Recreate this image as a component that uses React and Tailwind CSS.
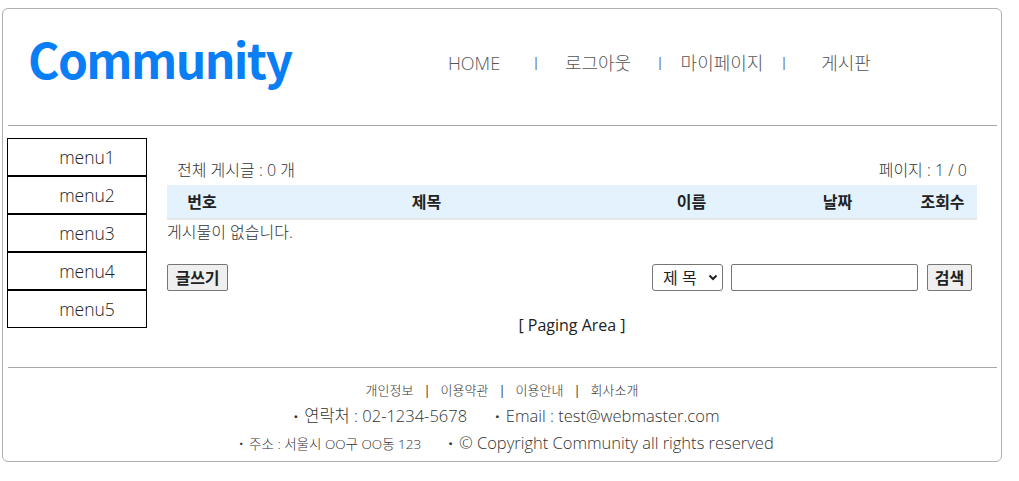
import React from 'react';

const FONT = "font-['Open_Sans','Noto_Sans_CJK_KR',sans-serif]";

const NAV = ['HOME', '로그아웃', '마이페이지', '게시판'];
const MENUS = ['menu1', 'menu2', 'menu3', 'menu4', 'menu5'];
const FOOTER_LINKS = ['개인정보', '이용약관', '이용안내', '회사소개'];

/* 게시판 헤더 컬럼 — 폭은 px 고정 */
const COLUMNS = [
  { label: '번호', w: 'w-[70px]' },
  { label: '제목', w: 'w-[379px]' },
  { label: '이름', w: 'w-[151px]' },
  { label: '날짜', w: 'w-[141px]' },
  { label: '조회수', w: 'w-[69px]' },
];

const Dot = () => <span className="font-bold mr-[6px]">·</span>;

const Header = () => (
  <div className="h-[116px] flex">
    <div className="w-[416px] pl-[25px] pt-[25px]">
      <h1 className="font-['Noto_Sans_CJK_KR',sans-serif] text-[48px] leading-[48px] font-bold text-[#0a7ef5] tracking-[-1.6px]">Community</h1>
    </div>
    <ul className="flex pt-[42px] h-fit text-[18px] leading-[24px] font-light text-[#555]">
      {NAV.map((item, i) => (
        <React.Fragment key={item}>
          {i > 0 && <li className="w-[14px] text-center">I</li>}
          <li className="w-[110px] text-center">{item}</li>
        </React.Fragment>
      ))}
    </ul>
  </div>
);

const Sidebar = () => (
  <ul className="ml-[4px] mt-[12px] w-[140px]">
    {MENUS.map((m) => (
      <li
        key={m}
        className="h-[38px] border border-black pl-[20px] text-center text-[17.5px] leading-[36px] font-light text-[#222]"
      >
        {m}
      </li>
    ))}
  </ul>
);

const Board = () => (
  <div className="ml-[20px] w-[810px] pt-[32px] text-[#333]">
    <div className="flex justify-between h-[24px] px-[10px] text-[16px] leading-[24px] font-light">
      <span>전체 게시글 : 0 개</span>
      <span>페이지 : 1 / 0</span>
    </div>

    <div className="mt-[3px] h-[35px] flex items-center bg-[#e3f2fd] border-b-2 border-[#e4e6e8] text-[16px] font-bold text-[#222]">
      {COLUMNS.map((c) => (
        <div key={c.label} className={`${c.w} text-center`}>{c.label}</div>
      ))}
    </div>

    <p className="h-[24px] text-[16px] leading-[24px] font-light">게시물이 없습니다.</p>

    <div className="mt-[20px] flex justify-between h-[27px]">
      <button className="h-[27px] w-[61px] bg-[#efefef] border border-[#767676] rounded-[2px] text-[16px] font-bold text-[#222] leading-none">
        글쓰기
      </button>
      <div className="flex mr-[5px]">
        <div className="relative w-[71px] h-[27px]">
          <select className="appearance-none w-full h-full border border-[#767676] rounded-[3px] bg-white pl-[10px] text-[16px] text-[#222] leading-none">
            <option>제 목</option>
          </select>
          <svg className="absolute right-[5px] top-[10px] pointer-events-none" width="10" height="7" viewBox="0 0 10 7">
            <path d="M1.5 1.5 L5 5 L8.5 1.5" fill="none" stroke="#222" strokeWidth="2" />
          </svg>
        </div>
        <input className="ml-[8px] w-[187px] h-[27px] border border-[#767676] rounded-[2px] bg-white" />
        <button className="ml-[9px] h-[27px] w-[45px] bg-[#efefef] border border-[#767676] rounded-[2px] text-[16px] font-bold text-[#222] leading-none">
          검색
        </button>
      </div>
    </div>

    <p className="mt-[22px] h-[24px] text-center text-[16px] leading-[24px] text-[#222]">[ Paging Area ]</p>
  </div>
);

const Footer = () => (
  <div className="h-[93px] pt-[12px] text-[#333]">
    <ul className="flex justify-center gap-[10px] h-[20px] text-[13px] leading-[20px] font-light">
      {FOOTER_LINKS.map((l, i) => (
        <React.Fragment key={l}>
          {i > 0 && <li className="font-normal text-[#333]">|</li>}
          <li>{l}</li>
        </React.Fragment>
      ))}
    </ul>
    <div className="mt-[3px] flex justify-center pl-[9px] h-[26px] text-[16.5px] leading-[26px] font-light">
      <span><Dot />연락처 : 02-1234-5678</span>
      <span className="ml-[28px]"><Dot />Email : test@webmaster.com</span>
    </div>
    <div className="mt-[1px] flex justify-center items-baseline pl-[9px] h-[26px] leading-[26px] font-light">
      <span className="text-[13.5px]"><Dot />주소 : 서울시 OO구 OO동 123</span>
      <span className="ml-[27px] text-[16.5px]"><Dot />© Copyright Community all rights reserved</span>
    </div>
  </div>
);

export default function App() {
  return (
    <div className={`${FONT} bg-white`}>
      <div className="ml-[2px] mt-[8px] w-[1000px] h-[454px] border border-[#b0b0b0] rounded-[6px]">
        <Header />
        <div className="ml-[5px] mr-[4px] border-t border-[#a8a8a8]" />
        <div className="h-[241px] flex">
          <Sidebar />
          <Board />
        </div>
        <div className="ml-[5px] mr-[4px] border-t border-[#a8a8a8]" />
        <Footer />
      </div>
    </div>
  );
}
